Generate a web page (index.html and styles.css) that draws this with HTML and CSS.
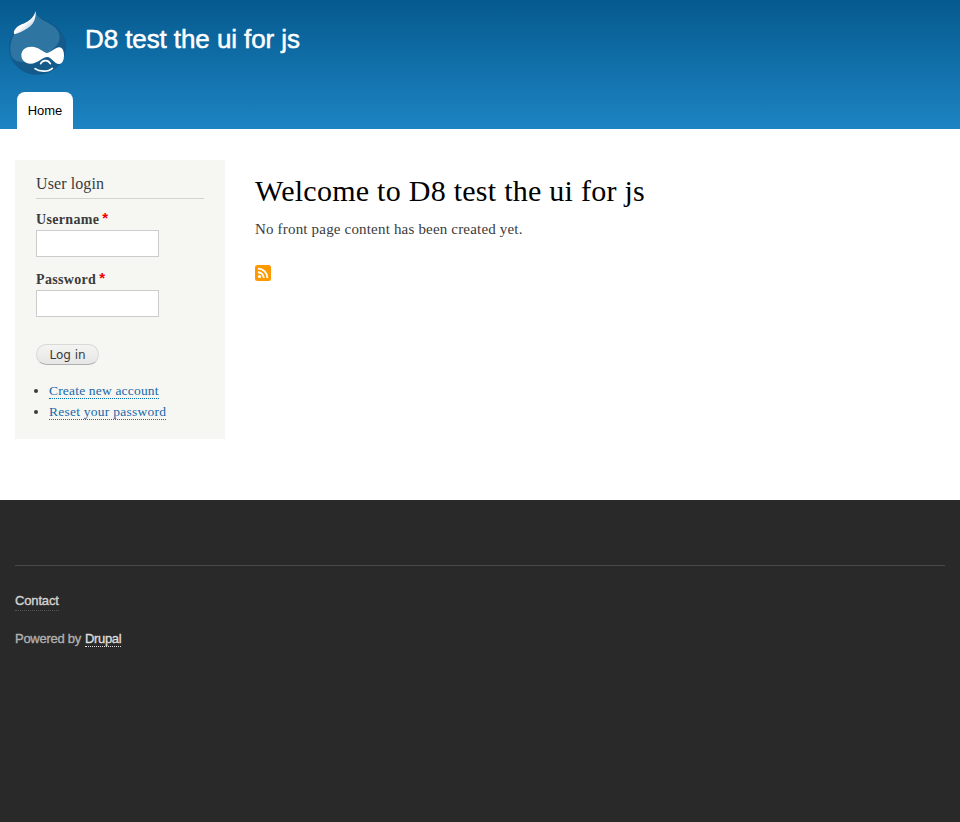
FILE: index.html
```html
<!DOCTYPE html>
<html lang="en">
<head>
<meta charset="utf-8">
<title>Welcome to D8 test the ui for js</title>
<link rel="stylesheet" href="styles.css">
</head>
<body>
<header class="header">
  <div class="branding">
    <svg class="logo" viewBox="24 30 180 198" role="img" aria-label="Home">
      <defs>
        <linearGradient id="shine" x1="0.2" y1="0.2" x2="0.8" y2="0.9">
          <stop offset="0.5" stop-color="#fff"/>
          <stop offset="1" stop-color="#9dbcd3"/>
        </linearGradient>
      </defs>
      <path d="M107 33C111 51 124 55 144 66C177 82 197 108 197 140C197 188 159 223 112 223C65 223 29 189 29 143C29 112 43 91 65 75C87 60 103 53 107 33Z" fill="#145b8c" stroke="#0d5689" stroke-width="2"/>
      <path d="M107 36C112 53 127 59 145 69C166 80 179 94 179 111C179 145 136 164 103 178C78 189 50 191 36 172C25 146 31 107 61 81C80 63 103 58 107 36Z" fill="#2f75a2"/>
      <path d="M107 33C108 48 105 69 88 81C70 94 57 99 43 103C38 93 49 80 65 73C84 66 101 55 107 33Z" fill="url(#shine)"/>
      <path d="M64 166C64 150 77 140 95 140C116 140 130 157 140 159C151 159 164 143 178 142C188 142 192 155 192 166C192 179 188 192 177 192C164 192 153 171 142 171C127 171 115 191 91 191C76 191 64 181 64 166Z" fill="#fff"/>
      <path d="M122 191C127 181 143 177 151 191M105 206C117 215 145 217 157 205" fill="none" stroke="#fff" stroke-width="5" stroke-linecap="round"/>
    </svg>
    <a class="site-name" href="#">D8 test the ui for js</a>
  </div>
  <nav class="menu"><a class="tab" href="#">Home</a></nav>
</header>
<main class="main">
  <aside class="sidebar">
    <h2 class="block-title">User login</h2>
    <form class="form">
      <label class="label" for="user"><span>Username</span><span class="required">*</span></label>
      <input class="field" id="user" type="text">
      <label class="label" for="pass"><span>Password</span><span class="required">*</span></label>
      <input class="field" id="pass" type="password">
      <button class="button" type="button">Log in</button>
    </form>
    <ul class="links">
      <li><a class="create" href="#">Create new account</a></li>
      <li><a class="reset" href="#">Reset your password</a></li>
    </ul>
  </aside>
  <section class="content">
    <h1 class="title">Welcome to D8 test the ui for js</h1>
    <p class="empty">No front page content has been created yet.</p>
    <a class="feed" href="#" aria-label="Subscribe">
      <svg viewBox="0 0 16 16" width="16" height="16">
        <rect width="16" height="16" rx="2.5" fill="#ff9900"/>
        <circle cx="4.5" cy="11.5" r="1.6" fill="#fff"/>
        <path d="M3 7.2A5.9 5.9 0 0 1 8.8 13M3 3.6A9.4 9.4 0 0 1 12.4 13" fill="none" stroke="#fff" stroke-width="1.9"/>
      </svg>
    </a>
  </section>
</main>
<footer class="footer">
  <div class="footer-inner">
    <div class="row"><a class="contact" href="#">Contact</a></div>
    <div class="row powered"><span class="by">Powered by</span><a class="drupal" href="#">Drupal</a></div>
  </div>
</footer>
</body>
</html>
```
FILE: styles.css
```css
* { box-sizing: border-box; }
body {
  margin: 0;
  min-height: 822px;
  display: flex;
  flex-direction: column;
  background: #fff;
  color: #3b3b3b;
  font-family: Georgia, "Liberation Serif", serif;
}
a { text-decoration: none; }
h1, h2, p, ul { margin: 0; padding: 0; font-weight: normal; }

.header {
  height: 129px;
  display: flex;
  flex-direction: column;
  justify-content: space-between;
  background: linear-gradient(#055a8e, #1d84c3);
  font-family: "Liberation Sans", sans-serif;
}
.branding { display: flex; padding: 10px 0 0 8px; gap: 17px; }
.logo { width: 60px; height: 66px; }
.site-name {
  margin-top: 14px;
  color: #fff;
  font-size: 26px;
  line-height: 30px;
  letter-spacing: -0.09px;
  -webkit-text-stroke: 0.5px #fff;
}
.menu { display: flex; padding-left: 17px; }
.tab {
  width: 56px;
  height: 37px;
  border-radius: 8px 8px 0 0;
  background: #fff;
  color: #000;
  font-size: 13px;
  line-height: 37px;
  text-align: center;
}

.main { display: flex; gap: 30px; height: 371px; padding: 31px 15px 0; }
.sidebar {
  width: 210px;
  height: 279px;
  padding: 13px 21px 0;
  background: #f6f6f2;
}
.block-title {
  height: 26px;
  border-bottom: 1px solid #d3d3d0;
  font-size: 16px;
  line-height: 22px;
  letter-spacing: 0.1px;
}
.form { display: flex; flex-direction: column; align-items: flex-start; }
.label {
  display: flex;
  gap: 3px;
  height: 20px;
  margin-top: 11px;
  font-size: 14px;
  line-height: 19px;
  font-weight: bold;
  letter-spacing: 0.33px;
}
.required { color: #e00; font: bold 15px/16px "Liberation Sans", sans-serif; }
.field {
  width: 123px;
  height: 27px;
  margin: 0 0 2px;
  padding: 4px;
  border: 1px solid #ccc;
  background: #fff;
}
.button {
  height: 21px;
  width: 63px;
  margin-top: 25px;
  padding: 0;
  border: 1px solid #d8d8d6;
  border-bottom-color: #b0b0ae;
  border-radius: 11px;
  background: linear-gradient(#f4f4f2, #e6e6e6);
  color: #3a3a3a;
  font: 12px/18px "DejaVu Sans", sans-serif;
}
.links { padding-left: 13px; margin-top: 15px; font-size: 13.5px; line-height: 21px; }
.links li { height: 21px; }
.links a {
  display: inline-block;
  height: 18px;
  line-height: 19px;
  border-bottom: 1px dotted #0071b3;
  color: #1769aa;
}
.create { letter-spacing: 0.18px; }
.reset { letter-spacing: 0.25px; }

.content { padding-top: 13px; }
.title { color: #000; font-size: 30px; line-height: 36px; letter-spacing: 0.26px; }
.empty { margin-top: 9px; font-size: 15px; line-height: 22px; letter-spacing: 0.18px; }
.feed { display: block; width: 16px; height: 16px; margin-top: 25px; }
.feed svg { display: block; }

.footer {
  flex: 1;
  padding: 65px 15px 0;
  background: #292929;
  font: 13px/20px "Liberation Sans", sans-serif;
}
.footer-inner { border-top: 1px solid #4a4a4a; padding-top: 25px; }
.row { display: flex; height: 20px; -webkit-text-stroke: 0.35px; }
.contact { color: #d4d4d4; border-bottom: 1px dotted #555; letter-spacing: -0.15px; }
.powered { margin-top: 19px; gap: 4px; height: 17px; color: #b0b0b0; line-height: 18px; }
.by { letter-spacing: -0.27px; }
.drupal { color: #ddd; border-bottom: 1px dotted #ddd; letter-spacing: -0.33px; }
```
